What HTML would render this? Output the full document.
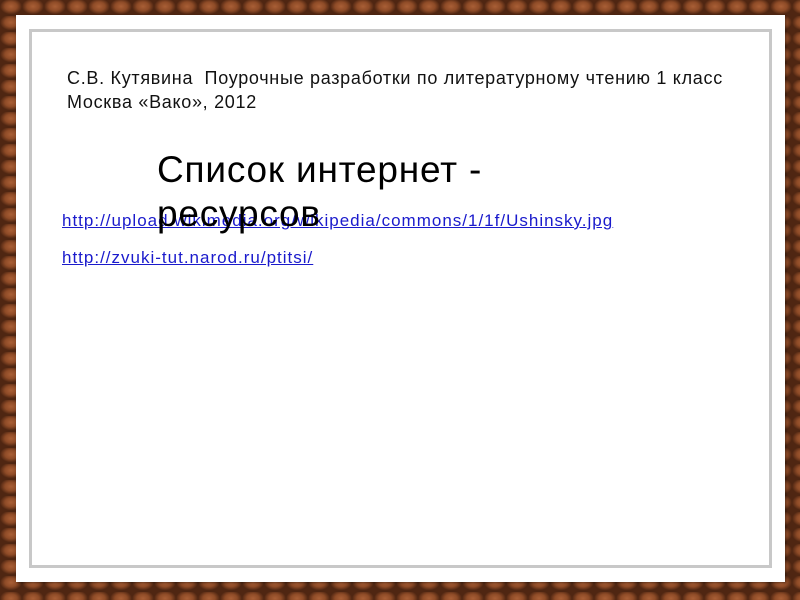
<!DOCTYPE html>
<html><head><meta charset="utf-8"><style>
html,body{margin:0;padding:0}
body{width:800px;height:600px;position:relative;overflow:hidden;
background-color:#7e4024;
background-image:
radial-gradient(ellipse 11px 8px at 50% 40%, #a95f36 0%, #8e4b27 55%, #4f2612 100%),
radial-gradient(ellipse 11px 8px at 50% 40%, #a95f36 0%, #8e4b27 55%, #4f2612 100%);
background-size:22px 16px,22px 16px;
background-position:0 0,11px 8px;}
.panel{position:absolute;left:16px;top:15px;width:769px;height:567px;background:#fff;box-shadow:1px 1px 2px rgba(0,0,0,.4)}
.frame{position:absolute;left:29px;top:29px;width:737px;height:533px;border:3px solid #c8c8c8;background:#fff}
.t{position:absolute;font-family:"Liberation Sans",sans-serif;color:#111;white-space:nowrap}
a{color:#1a1acc;text-decoration:underline;font-family:"Liberation Sans",sans-serif;font-size:17px;letter-spacing:1px;position:absolute;left:62px;white-space:nowrap}
</style></head><body>
<div class="panel"></div><div class="frame"></div>
<div class="t" style="left:67px;top:66px;font-size:18px;letter-spacing:0.7px;line-height:24px">С.В. Кутявина&nbsp; Поурочные разработки по литературному чтению 1 класс<br>Москва «Вако», 2012</div>
<a style="top:211px">http://upload.wikimedia.org/wikipedia/commons/1/1f/Ushinsky.jpg</a>
<a style="top:248px">http://zvuki-tut.narod.ru/ptitsi/</a>
<div class="t" style="left:157px;top:148px;font-size:37px;letter-spacing:0.8px;line-height:44px;color:#000">Список интернет -<br>ресурсов</div>
</body></html>
